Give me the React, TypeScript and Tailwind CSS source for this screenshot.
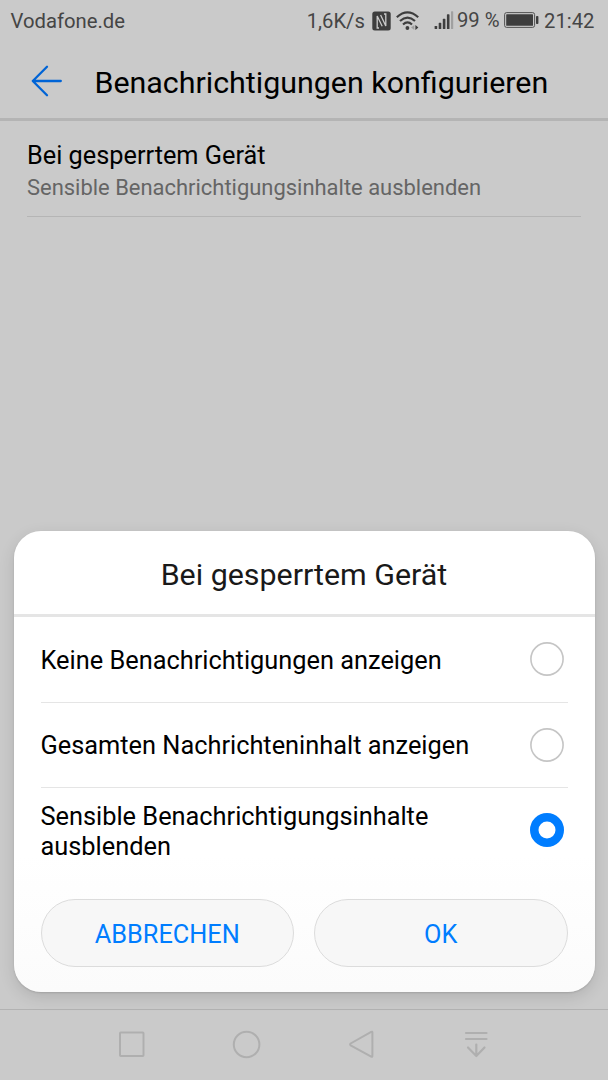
import { useState } from "react";

const options = [
  "Keine Benachrichtigungen anzeigen",
  "Gesamten Nachrichteninhalt anzeigen",
  "Sensible Benachrichtigungsinhalte ausblenden",
];

const StatusBar = () => (
  <div className="flex h-[42px] items-center pl-[10.5px] pr-[13.5px] text-[20.25px] leading-6 text-[#454545]">
    <span className="mr-auto">Vodafone.de</span>
    <span>1,6K/s</span>
    {/* NFC */}
    <svg className="ml-[7.5px]" width="19" height="20" viewBox="0 0 19 20">
      <rect x="0.3" y="0.6" width="18.4" height="18.8" rx="2.5" fill="#3e3e3e" />
      <path d="M7 17H5.2V5L10.2 15.2M8.6 4L13.8 15V3H12" fill="none" stroke="#cacaca" strokeWidth="1.3" />
    </svg>
    {/* WLAN */}
    <svg className="ml-[5px]" width="24" height="20" viewBox="0 0 24 20" fill="none" stroke="#3e3e3e" strokeWidth="2.2">
      <path d="M0.8 6.2Q11.5 -3.4 22.2 6.2" />
      <path d="M4 10Q11.5 3.4 19 10" />
      <path d="M7 13.5Q11.5 9.4 16 13.5" />
      <circle cx="11.4" cy="17" r="1.9" fill="#3e3e3e" stroke="none" />
      <path d="M18.3 14V19L15 16.5Z" fill="#a0a0a0" stroke="none" />
      <path d="M19.4 14V19L22.4 16.5Z" fill="#3e3e3e" stroke="none" />
    </svg>
    <svg className="ml-[13.5px] -mt-[2px]" width="20" height="20" viewBox="0 0 20 20" fill="#3e3e3e">
      <rect x="0.6" y="16" width="2.6" height="3" rx="0.6" />
      <rect x="4.7" y="12.8" width="2.6" height="6.2" rx="0.6" />
      <rect x="8.8" y="8.8" width="2.6" height="10.2" rx="0.6" />
      <rect x="12.9" y="4.3" width="2.6" height="14.7" rx="0.6" />
      <rect x="17" y="1.2" width="2.2" height="17.8" rx="0.6" fill="#a0a0a0" />
    </svg>
    <span className="ml-[3px] -mt-[3px]">99 %</span>
    <svg className="ml-[4px] -mt-[2px]" width="35" height="16" viewBox="0 0 35 16">
      <rect x="0.6" y="0.6" width="30" height="14.8" rx="2" fill="none" stroke="#454545" strokeWidth="0.9" />
      <rect x="2.2" y="2.2" width="26.8" height="11.6" rx="0.6" fill="#3e3e3e" />
      <rect x="32" y="4" width="2.4" height="8" rx="0.8" fill="#3e3e3e" />
    </svg>
    <span className="ml-[5.5px]">21:42</span>
  </div>
);

const NavBar = () => (
  <div className="flex h-[71px] justify-center gap-[83px] border-t border-[#b2b2b2] pt-[18px]">
    <svg width="32" height="32" viewBox="0 0 32 32" fill="none" stroke="#afafaf" strokeWidth="2">
      <rect x="4" y="4.5" width="23.5" height="23.5" rx="0.8" />
    </svg>
    <svg width="32" height="32" viewBox="0 0 32 32" fill="none" stroke="#afafaf" strokeWidth="2">
      <circle cx="15.6" cy="16.5" r="12.8" />
    </svg>
    <svg width="32" height="32" viewBox="0 0 32 32" fill="none" stroke="#afafaf" strokeWidth="2" strokeLinejoin="round">
      <path d="M25.2 3.8Q26.4 3.3 26.4 4.5V28Q26.4 29.2 25.2 28.7L4.6 17.3Q3.6 16.4 4.6 15.5Z" />
    </svg>
    <svg width="32" height="32" viewBox="0 0 32 32" fill="none" stroke="#afafaf" strokeWidth="2.2" strokeLinecap="round" strokeLinejoin="round">
      <path d="M5 5H25.5M5 11H25.5M15.3 16.5V28M7 19.5L15.3 28L23.5 19.5" />
    </svg>
  </div>
);

const Radio = ({ checked }: { checked: boolean }) => (
  <svg width="34" height="34" viewBox="0 0 34 34" fill="none">
    {checked ? (
      <circle cx="17" cy="17" r="12.75" stroke="#007dff" strokeWidth="8.5" />
    ) : (
      <circle cx="17" cy="17" r="16.1" stroke="#c5c5c5" strokeWidth="1.6" />
    )}
  </svg>
);

const App = () => {
  const [selected, setSelected] = useState(2);

  return (
    <div className="relative flex h-[1080px] w-[608px] flex-col overflow-hidden bg-[#cacaca] font-['Roboto','Liberation_Sans',sans-serif]">
      <StatusBar />

      <header className="flex h-[79px] items-center border-b-[3px] border-[#b4b4b4] pl-[31px]">
        <button aria-label="Zurück" className="mt-[2px]">
          <svg width="32" height="32" viewBox="0 0 32 32" fill="none" stroke="#0064d6" strokeWidth="2.3" strokeLinecap="round" strokeLinejoin="round">
            <path d="M29.8 16H1.8M16 1.8L1.8 16L16 30.2" />
          </svg>
        </button>
        <h1 className="ml-[31.5px] mt-[5px] whitespace-nowrap text-[30.4px] leading-9 text-black">
          Benachrichtigungen konfigurieren
        </h1>
      </header>

      <main className="flex-1 px-[27px]">
        <div className="h-24 border-b border-[#b5b5b5] pt-5">
          <div className="text-[25.3px] leading-[30px] text-black">Bei gesperrtem Gerät</div>
          <div className="mt-[3px] whitespace-nowrap text-[21.95px] leading-[28px] text-[#656565]">
            Sensible Benachrichtigungsinhalte ausblenden
          </div>
        </div>
      </main>

      <NavBar />

      {/* Dialog */}
      <div
        role="dialog"
        className="absolute bottom-[88px] left-[13.5px] h-[461px] w-[581px] rounded-[27px] bg-linear-to-b from-white from-70% to-[#fbfbfb] shadow-[0_5px_16px_rgba(0,0,0,0.12),0_1px_2px_rgba(0,0,0,0.12)]"
      >
        <h2 className="h-[86px] border-b-[3px] border-[#e5e5e5] pt-[26px] text-center text-[30.4px] leading-9 text-[#191919]">
          Bei gesperrtem Gerät
        </h2>

        <div className="px-[27px]">
          {options.map((option, i) => (
            <button
              key={option}
              onClick={() => setSelected(i)}
              className="flex h-[85.5px] w-full items-center justify-between border-b border-[#e5e5e5] pr-[3.5px] text-left text-[25.35px] leading-[29.6px] text-black last:border-transparent"
            >
              <span className="w-[440px] pt-[3px]">{option}</span>
              <Radio checked={selected === i} />
            </button>
          ))}
        </div>

        <div className="mt-[25.5px] flex gap-5 px-[27px] text-[25.3px] text-[#007dff]">
          <button className="h-[67.5px] flex-1 rounded-full border border-[#dcdcdc] bg-[#f7f7f7] pt-1">
            ABBRECHEN
          </button>
          <button className="h-[67.5px] flex-1 rounded-full border border-[#dcdcdc] bg-[#f7f7f7] pt-1">
            OK
          </button>
        </div>
      </div>
    </div>
  );
};

export default App;
